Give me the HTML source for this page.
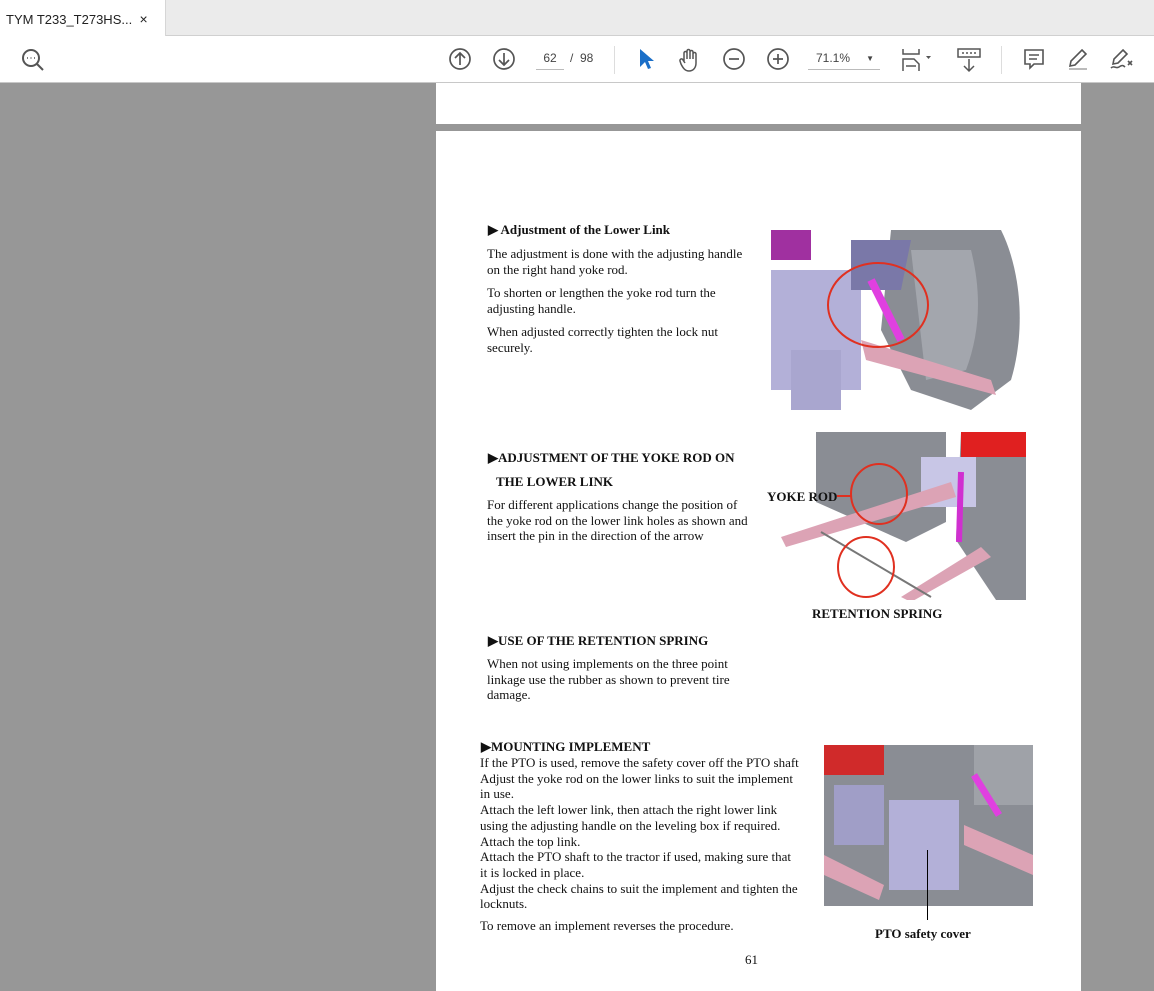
<!DOCTYPE html>
<html><head><meta charset="utf-8"><style>
*{margin:0;padding:0;box-sizing:border-box}
body{width:1154px;height:989px;overflow:hidden;background:#979797;font-family:"Liberation Serif",serif;position:relative}
.tabbar{position:absolute;left:0;top:0;width:1154px;height:36px;background:#ebebeb;border-bottom:1px solid #d0d0d0}
.tab{position:absolute;left:0;top:0;height:36px;background:#fff;font:13px "Liberation Sans",sans-serif;color:#222;padding:11px 0 0 6px;white-space:nowrap;width:166px;border-right:1px solid #d6d6d6}
.tool{position:absolute;left:0;top:36px;width:1154px;height:47px;background:#fff;border-bottom:1px solid #c8c8c8}
.ic{position:absolute;top:47px}
.page{position:absolute;background:#fff;left:436px;width:645px}
.t{position:absolute;font-size:13px;line-height:15.5px;color:#111;white-space:nowrap}
.b{font-weight:bold}
.img{position:absolute;overflow:hidden}
</style></head><body>
<div class="tabbar"><div class="tab">TYM T233_T273HS... &nbsp;<span style="font-size:14px">×</span></div></div>
<div class="tool"></div>
<svg class="ic" style="left:20px" width="26" height="26" viewBox="0 0 26 26" fill="none" stroke="#555" stroke-width="2"><circle cx="11" cy="11" r="8"/><path d="M17 17l6 6"/><path d="M7 11h1M10.5 11h1M14 11h1" stroke-width="1.5"/></svg>
<svg class="ic" style="left:448px" width="24" height="24" viewBox="0 0 24 24" fill="none" stroke="#555" stroke-width="1.7"><circle cx="12" cy="12" r="10"/><path d="M12 18V6M7 11l5-5 5 5"/></svg>
<svg class="ic" style="left:492px" width="24" height="24" viewBox="0 0 24 24" fill="none" stroke="#555" stroke-width="1.7"><circle cx="12" cy="12" r="10"/><path d="M12 6v12M7 13l5 5 5-5"/></svg>
<div style="position:absolute;left:536px;top:51px;width:28px;border-bottom:1px solid #bbb;font:12px 'Liberation Sans',sans-serif;color:#444;text-align:center;padding-bottom:4px">62</div>
<div style="position:absolute;left:570px;top:51px;font:12px 'Liberation Sans',sans-serif;color:#444">/ &nbsp;98</div>
<div style="position:absolute;left:614px;top:46px;width:1px;height:28px;background:#ddd"></div>
<svg class="ic" style="left:636px" width="20" height="24" viewBox="0 0 20 24"><path d="M4 2v18l5-5 3 7 3-1-3-7h6z" fill="#1b6fc8"/></svg>
<svg class="ic" style="left:678px" width="24" height="26" viewBox="0 0 24 26" fill="none" stroke="#555" stroke-width="1.5"><path d="M6 14V6a1.5 1.5 0 013 0v6M9 12V4a1.5 1.5 0 013 0v8M12 12V5a1.5 1.5 0 013 0v7M15 12V7a1.5 1.5 0 013 0v9c0 5-3 8-7 8s-6-3-8-7l-1-3a1.5 1.5 0 013-1l2 3"/></svg>
<svg class="ic" style="left:722px" width="24" height="24" viewBox="0 0 24 24" fill="none" stroke="#555" stroke-width="1.7"><circle cx="12" cy="12" r="10"/><path d="M7 12h10"/></svg>
<svg class="ic" style="left:766px" width="24" height="24" viewBox="0 0 24 24" fill="none" stroke="#555" stroke-width="1.7"><circle cx="12" cy="12" r="10"/><path d="M7 12h10M12 7v10"/></svg>
<div style="position:absolute;left:808px;top:51px;width:72px;border-bottom:1px solid #bbb;font:12px 'Liberation Sans',sans-serif;color:#444;padding:0 0 4px 8px">71.1% <span style="position:absolute;right:6px;font-size:8px;top:3px">▼</span></div>
<svg class="ic" style="left:900px" width="36" height="26" viewBox="0 0 36 26" fill="none" stroke="#555" stroke-width="1.5"><path d="M3 2v5h16V2M3 24V12h11l5 5v7"/><path d="M6 19h10"/><path d="M26 9l2.5 3 2.5-3z" fill="#555" stroke="none"/></svg>
<svg class="ic" style="left:956px" width="26" height="26" viewBox="0 0 26 26" fill="none" stroke="#555" stroke-width="1.5"><rect x="2" y="2" width="22" height="8"/><path d="M6 6h2M10 6h2M14 6h2M18 6h2M13 12v12M8 19l5 5 5-5"/></svg>
<div style="position:absolute;left:1001px;top:46px;width:1px;height:28px;background:#ddd"></div>
<svg class="ic" style="left:1022px" width="24" height="24" viewBox="0 0 24 24" fill="none" stroke="#555" stroke-width="1.6"><path d="M3 3h18v14h-9l-4 4v-4H3z"/><path d="M7 8h10M7 12h8"/></svg>
<svg class="ic" style="left:1066px" width="24" height="24" viewBox="0 0 24 24" fill="none" stroke="#555" stroke-width="1.6"><path d="M16 3l4 4-11 11-5 1 1-5z"/><path d="M3 22h18" stroke="#bbb" stroke-width="2"/></svg>
<svg class="ic" style="left:1108px" width="26" height="24" viewBox="0 0 26 24" fill="none" stroke="#555" stroke-width="1.6"><path d="M15 3l4 4-9 9-5 1 1-5z"/><path d="M3 21c3-3 5 1 8-1s4-2 6 0M20 14l4 4M24 14l-4 4"/></svg>

<div class="page" style="top:83px;height:41px"></div>
<div class="page" style="top:131px;height:860px"></div>

<div class="t b" style="left:488px;top:222px">▶ Adjustment of the Lower Link</div>
<div class="t" style="left:487px;top:246px">The adjustment is done with the adjusting handle<br>on the right hand yoke rod.</div>
<div class="t" style="left:487px;top:285px">To shorten or lengthen the yoke rod turn the<br>adjusting handle.</div>
<div class="t" style="left:487px;top:324px">When adjusted correctly tighten the lock nut<br>securely.</div>

<div class="t b" style="left:488px;top:450px">▶ADJUSTMENT OF THE YOKE ROD ON</div>
<div class="t b" style="left:496px;top:474px">THE LOWER LINK</div>
<div class="t" style="left:487px;top:497px">For different applications change the position of<br>the yoke rod on the lower link holes as shown and<br>insert the pin in the direction of the arrow</div>

<div class="t b" style="left:488px;top:633px">▶USE OF THE RETENTION SPRING</div>
<div class="t" style="left:487px;top:656px">When not using implements on the three point<br>linkage use the rubber as shown to prevent tire<br>damage.</div>

<div class="t b" style="left:481px;top:739px">▶MOUNTING IMPLEMENT</div>
<div class="t" style="left:480px;top:755px;line-height:15.7px">If the PTO is used, remove the safety cover off the PTO shaft<br>Adjust the yoke rod on the lower links to suit the implement<br>in use.<br>Attach the left lower link, then attach the right lower link<br>using the adjusting handle on the leveling box if required.<br>Attach the top link.<br>Attach the PTO shaft to the tractor if used, making sure that<br>it is locked in place.<br>Adjust the check chains to suit the implement and tighten the<br>locknuts.</div>
<div class="t" style="left:480px;top:918px">To remove an implement reverses the procedure.</div>
<div class="t" style="left:745px;top:952px">61</div>

<svg class="img" style="left:771px;top:230px" width="250" height="197" viewBox="0 0 250 197">
<rect width="250" height="197" fill="#fff"/>
<path d="M120 0h110c20 40 25 100 10 150l-40 30-60-20-30-60z" fill="#8a8d94"/>
<path d="M140 20h60c10 40 10 80-5 120l-40 10z" fill="#a3a6ad"/>
<rect x="0" y="40" width="90" height="120" fill="#b3b0d8"/>
<rect x="20" y="120" width="50" height="60" fill="#a9a6cf"/>
<path d="M0 0h40v30H0z" fill="#a030a0"/>
<path d="M80 10h60l-10 50H80z" fill="#7a78a8"/>
<path d="M90 110l130 40 5 15-130-35z" fill="#dca3b5"/>
<path d="M100 50l30 60" stroke="#e040e0" stroke-width="8"/>
<ellipse cx="107" cy="75" rx="50" ry="42" fill="none" stroke="#e03020" stroke-width="2"/>
</svg>
<svg class="img" style="left:771px;top:432px" width="255" height="168" viewBox="0 0 255 168">
<rect width="255" height="168" fill="#fff"/>
<path d="M45 0h130v90l-40 20-90-40z" fill="#8a8d94"/>
<path d="M190 0h65v168h-30l-40-60z" fill="#8a8d94"/>
<rect x="190" y="0" width="65" height="25" fill="#e02020"/>
<rect x="150" y="25" width="55" height="50" fill="#c8c6e6"/>
<path d="M10 105l170-55 5 15-170 50z" fill="#dca3b5"/>
<path d="M130 165l80-50 10 10-80 45z" fill="#dca3b5"/>
<path d="M190 40l-2 70" stroke="#d030d0" stroke-width="6"/>
<path d="M50 100l110 65" stroke="#777" stroke-width="2"/>
<ellipse cx="108" cy="62" rx="28" ry="30" fill="none" stroke="#e03020" stroke-width="2"/>
<ellipse cx="95" cy="135" rx="28" ry="30" fill="none" stroke="#e03020" stroke-width="2"/>
<path d="M66 64h14" stroke="#e03020" stroke-width="2"/>
</svg>
<div class="t b" style="left:767px;top:489px">YOKE ROD</div>
<div class="t b" style="left:812px;top:606px">RETENTION SPRING</div>
<svg class="img" style="left:824px;top:745px" width="209" height="161" viewBox="0 0 209 161">
<rect width="209" height="161" fill="#8a8d94"/>
<rect width="60" height="30" fill="#d02a2a"/>
<rect x="150" y="0" width="59" height="60" fill="#9fa2a8"/>
<rect x="65" y="55" width="70" height="90" fill="#b3b0d8"/>
<rect x="10" y="40" width="50" height="60" fill="#a09ec7"/>
<path d="M140 80l69 30v20l-69-30z" fill="#dca3b5"/>
<path d="M0 110l60 30-5 15-55-25z" fill="#dca3b5"/>
<path d="M150 30l25 40" stroke="#e040e0" stroke-width="7"/>
</svg>
<div style="position:absolute;left:927px;top:850px;width:1px;height:70px;background:#000"></div>
<div class="t b" style="left:875px;top:926px">PTO safety cover</div>
</body></html>
